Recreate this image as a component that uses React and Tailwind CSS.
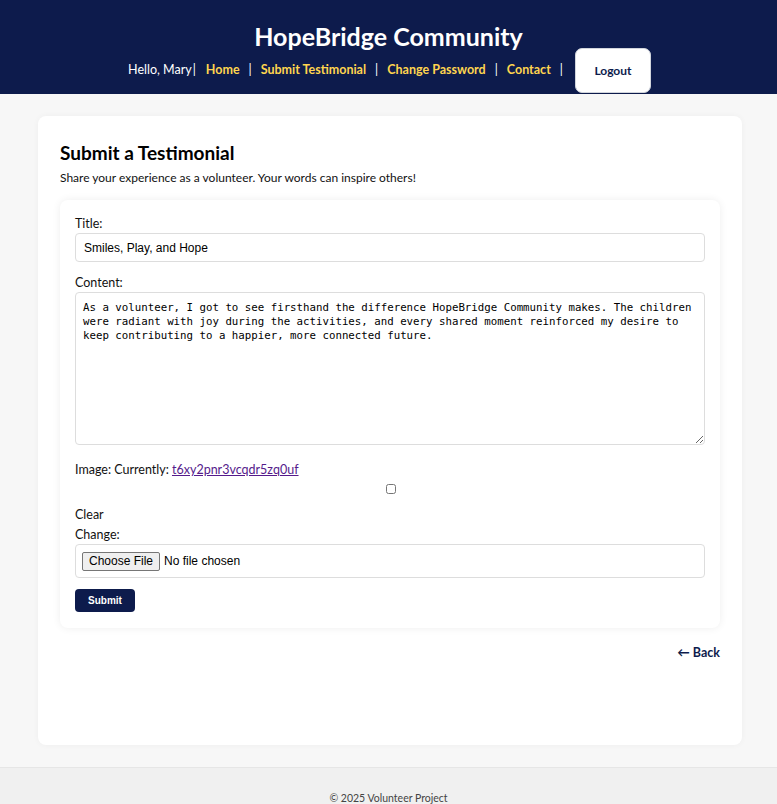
import { useState } from "react";

const sans = { fontFamily: 'Lato, "Noto Sans", sans-serif' };

function Header() {
  return (
    <header className="bg-[#0d1b4c] text-white h-[94px] flex flex-col items-center pt-[20px]">
      <h1 className="text-[25px] font-bold leading-[32px]">HopeBridge Community</h1>
      <nav className="flex items-center text-[12.5px] mt-[-4px] ml-[2px]">
        <span>Hello, Mary</span>
        <span className="ml-[1px] mr-[10px]">|</span>
        <a className="font-bold text-[#ffd54f]">Home</a>
        <span className="mx-[9px]">|</span>
        <a className="font-bold text-[#ffd54f]">Submit Testimonial</a>
        <span className="mx-[9px]">|</span>
        <a className="font-bold text-[#ffd54f]">Change Password</a>
        <span className="mx-[9px]">|</span>
        <a className="font-bold text-[#ffd54f]">Contact</a>
        <span className="mx-[9px]">|</span>
        <button className="ml-[3px] bg-white text-[#0d1b4c] font-bold text-[12px] w-[76px] h-[45px] rounded-[7px] border border-gray-300">
          Logout
        </button>
      </nav>
    </header>
  );
}

function Field({ label, children }) {
  return (
    <div className="flex flex-col">
      <label className="text-[12.5px] text-[#111] leading-[17px] mb-[1px]">{label}</label>
      {children}
    </div>
  );
}

export default function App() {
  const [text, setText] = useState(
    "As a volunteer, I got to see firsthand the difference HopeBridge Community makes. The children were radiant with joy during the activities, and every shared moment reinforced my desire to keep contributing to a happier, more connected future."
  );
  return (
    <div className="min-h-[804px] bg-[#f7f7f7] flex flex-col" style={sans}>
      <Header />
      <main className="pl-[38px] pr-[35px] pt-[22px] pb-[22px]">
        <section className="bg-white rounded-[8px] shadow-[0_0_6px_rgba(0,0,0,0.04)] px-[22px] pt-[24px] h-[629px]">
          <h2 className="text-[19px] font-bold text-black leading-[26px]">Submit a Testimonial</h2>
          <p className="text-[12px] text-[#111] leading-[17px] mt-[3px]">Share your experience as a volunteer. Your words can inspire others!</p>

          <form className="mt-[14px] bg-white rounded-[8px] shadow-[0_0_8px_rgba(0,0,0,0.07)] px-[15px] pt-[15px] pb-[16px]">
            <Field label="Title:">
              <input
                className="h-[29px] border border-[#ddd] rounded-[4px] px-[8px] text-[12px] text-black"
                style={{ fontFamily: '"Liberation Sans", Arial, sans-serif' }}
                defaultValue="Smiles, Play, and Hope"
              />
            </Field>
            <div className="mt-[12px]">
              <Field label="Content:">
                <textarea
                  className="h-[153px] border border-[#ddd] rounded-[4px] px-[7px] pt-[8px] pb-[6px] text-[10.75px] leading-[14px] text-black resize-y"
                  style={{ fontFamily: '"DejaVu Sans Mono", "Liberation Mono", monospace' }}
                  value={text}
                  onChange={(e) => setText(e.target.value)}
                />
              </Field>
            </div>
            <p className="mt-[16px] text-[12.5px] text-[#111] leading-[17px]">
              Image: Currently:{" "}
              <a className="text-[#551a8b] underline">t6xy2pnr3vcqdr5zq0uf</a>
            </p>
            <div className="flex justify-center mt-[6px]">
              <input type="checkbox" className="w-[10px] h-[10px] ml-[1px]" />
            </div>
            <p className="mt-[12px] text-[12.5px] text-[#111] leading-[17px]">Clear</p>
            <div className="mt-[3px]">
              <Field label="Change:">
                <div
                  className="h-[34px] border border-[#ddd] rounded-[4px] flex items-center px-[6px] text-[12px] text-black"
                  style={{ fontFamily: '"Liberation Sans", Arial, sans-serif' }}
                >
                  <span className="bg-[#efefef] border border-[#767676] rounded-[2px] px-[6px] h-[19px] flex items-center">
                    Choose File
                  </span>
                  <span className="ml-[4px]">No file chosen</span>
                </div>
              </Field>
            </div>
            <button
              type="button"
              className="mt-[11px] bg-[#0d1b4c] text-white text-[10px] font-bold w-[60px] h-[23px] rounded-[4px]"
              style={{ fontFamily: '"Liberation Sans", Arial, sans-serif' }}
            >
              Submit
            </button>
          </form>

          <div className="flex justify-end mt-[16px]">
            <a className="text-[12.5px] font-bold text-[#0d1b4c]">← Back</a>
          </div>
        </section>
      </main>
      <footer className="bg-[#f0f0f0] border-t border-[#e6e6e6] flex-1 flex justify-center pt-[23px]">
        <span className="text-[10.5px] text-[#444]">© 2025 Volunteer Project</span>
      </footer>
    </div>
  );
}
